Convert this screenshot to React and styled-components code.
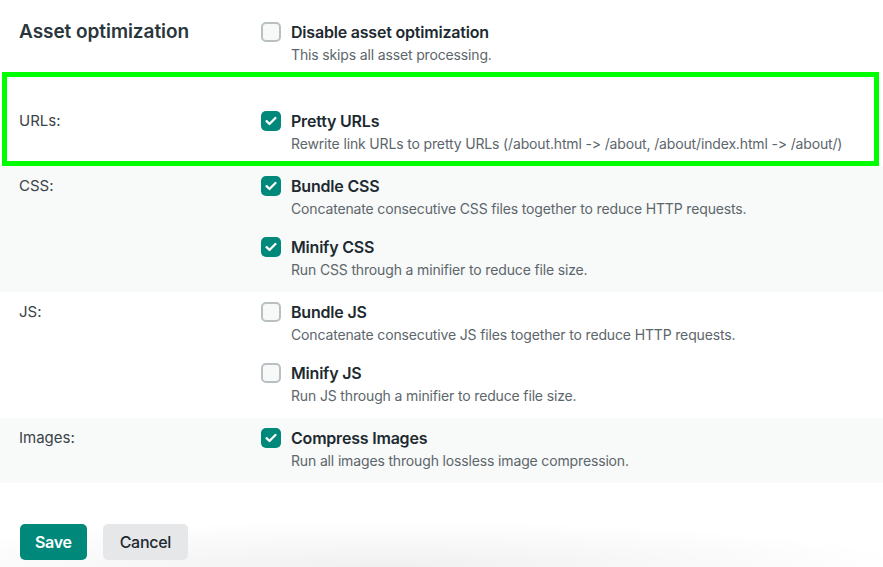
import React from "react";
import styled, { createGlobalStyle } from "styled-components";

const GlobalStyle = createGlobalStyle`
  body {
    margin: 0;
    background: #ffffff;
    font-family: Inter, "Noto Sans", "Liberation Sans", sans-serif;
    font-variant-ligatures: none;
    font-feature-settings: "calt" 0, "liga" 0;
    color: #1f2c32;
  }
`;

const Page = styled.div`
  width: 883px;
  min-height: 567px;
  display: flex;
  flex-direction: column;
`;

const Row = styled.div`
  display: grid;
  grid-template-columns: 242px 1fr;
  padding: ${p => p.$pad || "8px 0 11px 19px"};
  background: ${p => (p.$shaded ? "#f8f9f9" : "#ffffff")};
  border: ${p => (p.$highlight ? "5px solid #00ff00" : "none")};
  margin: ${p => (p.$highlight ? "0 4px 0 2px" : "0")};
`;

const Heading = styled.h2`
  margin: 0;
  font-size: 19px;
  font-weight: 600;
  line-height: 24px;
  color: #2a363b;
  letter-spacing: -0.05px;
`;

const Label = styled.div`
  font-size: 15px;
  line-height: 24px;
  color: #3a4347;
`;

const Options = styled.div`
  display: flex;
  flex-direction: column;
  gap: 15px;
`;

const Option = styled.label`
  display: grid;
  grid-template-columns: 20px 1fr;
  column-gap: 10px;
`;

const Box = styled.span`
  width: 20px;
  height: 20px;
  margin-top: 2px;
  box-sizing: border-box;
  border-radius: 5px;
  display: flex;
  align-items: center;
  justify-content: center;
  background: ${p => (p.$checked ? "#00897b" : "#f7f8f8")};
  border: ${p => (p.$checked ? "none" : "2px solid #b9c0c3")};
`;

const Title = styled.div`
  font-size: 16px;
  font-weight: 600;
  line-height: 24px;
  letter-spacing: -0.2px;
  color: #1d2a30;
`;

const Desc = styled.div`
  grid-column: 2;
  font-size: 14px;
  line-height: 22px;
  letter-spacing: -0.15px;
  color: #5c666b;
`;

const Footer = styled.div`
  flex: 1;
  display: flex;
  align-items: flex-start;
  gap: 16px;
  padding: 41px 19px 0 20px;
  background: radial-gradient(
    ellipse 60% 55% at 44% 100%,
    rgba(0, 0, 0, 0.06),
    rgba(0, 0, 0, 0) 100%
  );
`;

const Button = styled.button`
  height: 36px;
  padding: 0 ${p => (p.$primary ? "15px" : "17px")};
  border: none;
  border-radius: 5px;
  font-family: inherit;
  font-size: 16px;
  letter-spacing: -0.3px;
  font-weight: ${p => (p.$primary ? 600 : 500)};
  background: ${p => (p.$primary ? "#00897b" : "#e5e7e9")};
  color: ${p => (p.$primary ? "#ffffff" : "#1d2a30")};
`;

const Check = ({ checked }) => (
  <Box $checked={checked}>
    {checked && (
      <svg width="12" height="10" viewBox="0 0 12 10">
        <path
          d="M1.6 5.2 L4.5 8 L10.4 2"
          fill="none"
          stroke="#fff"
          strokeWidth="2.3"
          strokeLinecap="round"
          strokeLinejoin="round"
        />
      </svg>
    )}
  </Box>
);

const Item = ({ checked, title, desc }) => (
  <Option>
    <Check checked={checked} />
    <Title>{title}</Title>
    <Desc>{desc}</Desc>
  </Option>
);

const groups = [
  {
    label: "CSS:",
    shaded: true,
    items: [
      { checked: true, title: "Bundle CSS", desc: "Concatenate consecutive CSS files together to reduce HTTP requests." },
      { checked: true, title: "Minify CSS", desc: "Run CSS through a minifier to reduce file size." }
    ]
  },
  {
    label: "JS:",
    items: [
      { checked: false, title: "Bundle JS", desc: "Concatenate consecutive JS files together to reduce HTTP requests." },
      { checked: false, title: "Minify JS", desc: "Run JS through a minifier to reduce file size." }
    ]
  },
  {
    label: "Images:",
    shaded: true,
    items: [
      { checked: true, title: "Compress Images", desc: "Run all images through lossless image compression." }
    ]
  }
];

export default function App() {
  return (
    <Page>
      <GlobalStyle />
      <Row $pad="20px 0 6px 19px">
        <Heading>Asset optimization</Heading>
        <Options>
          <Item checked={false} title="Disable asset optimization" desc="This skips all asset processing." />
        </Options>
      </Row>

      <Row $highlight $pad="32px 0 6px 12px">
        <Label>URLs:</Label>
        <Options>
          <Item
            checked={true}
            title="Pretty URLs"
            desc="Rewrite link URLs to pretty URLs (/about.html -> /about, /about/index.html -> /about/)"
          />
        </Options>
      </Row>

      {groups.map(group => (
        <Row key={group.label} $shaded={group.shaded}>
          <Label>{group.label}</Label>
          <Options>
            {group.items.map(item => (
              <Item key={item.title} {...item} />
            ))}
          </Options>
        </Row>
      ))}

      <Footer>
        <Button $primary>Save</Button>
        <Button>Cancel</Button>
      </Footer>
    </Page>
  );
}
